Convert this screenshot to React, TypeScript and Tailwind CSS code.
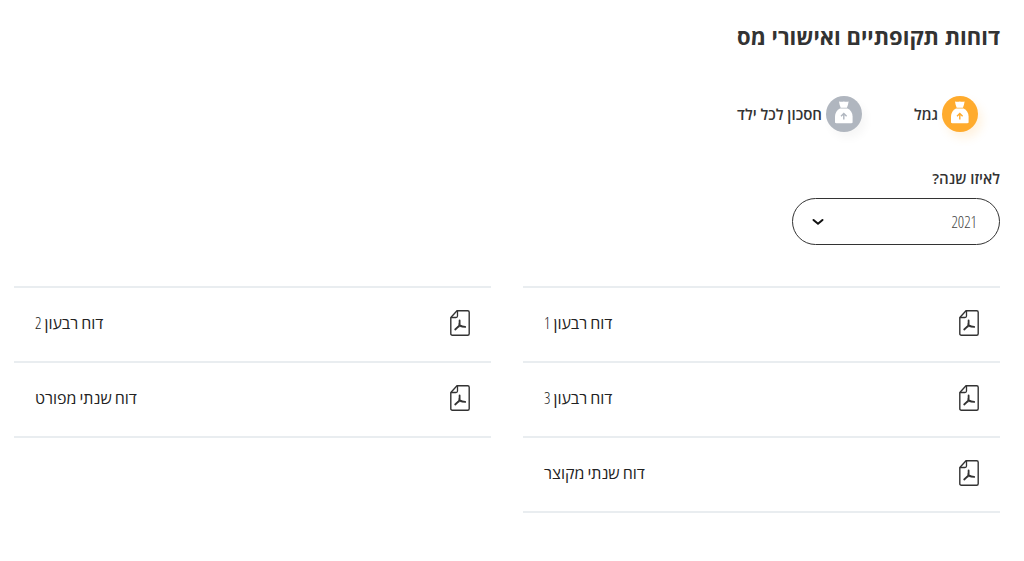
import clsx from 'clsx';
import { useState } from 'react';

type Report = { id: string; label: string };

const funds = [
  { id: 'gemel', label: 'גמל' },
  { id: 'child', label: 'חסכון לכל ילד' },
];

const years = ['2021', '2020', '2019'];

const firstColumn: Array<Report> = [
  { id: 'q1', label: 'דוח רבעון 1' },
  { id: 'q3', label: 'דוח רבעון 3' },
  { id: 'annual-short', label: 'דוח שנתי מקוצר' },
];

const secondColumn: Array<Report> = [
  { id: 'q2', label: 'דוח רבעון 2' },
  { id: 'annual-full', label: 'דוח שנתי מפורט' },
];

const MoneyBagIcon = () => (
  <svg className="h-9 w-9" viewBox="0 0 36 36" fill="none" aria-hidden="true">
    <path d="M13 5.500c1.700.5 3.300.4 4.800 0 1.600.4 3.200.5 4.800 0-.2 2.200-.9 4.200-1.700 6.300h-6.200c-.8-2.100-1.500-4.100-1.700-6.300Z" fill="#fff" />
    <path d="M14 12.600h7.600c3 1.500 5 4.300 5 8v5.500c0 .8-.4 1.200-1.200 1.200H10.200c-.8 0-1.200-.4-1.200-1.200v-5.500c0-3.700 2-6.500 5-8Z" fill="#fff" />
    <path d="M17.800 23.500v-6M15 20.200l2.800-2.800 2.800 2.800" stroke="currentColor" strokeWidth="1.400" />
  </svg>
);

const PdfIcon = () => (
  <svg className="h-[26px] w-5 shrink-0" viewBox="0 0 20 26" fill="none" stroke="#333" aria-hidden="true">
    <path d="M7 .8h10.700c.9 0 1.500.6 1.500 1.500v21.400c0 .9-.6 1.500-1.500 1.500H2.300c-.9 0-1.500-.6-1.500-1.500V7.500L7 .8Z" strokeWidth="1.400" />
    <path d="M7.500 1v5c0 .9-.6 1.500-1.500 1.500H1" strokeWidth="1.300" />
    <path d="M9.600 10.500v4.900M9.600 15.400 5.200 19.500M9.600 15.400c1.700.9 3.500 1.400 5.600 1.500" strokeWidth="1.800" strokeLinecap="round" />
    <path d="M9 13.500c-.2 1.800-.8 3-2 4.300 1.800-1 3.200-1.300 5.200-1.200-1.600-.6-2.600-1.500-3.200-3.100Z" strokeWidth=".6" />
  </svg>
);

const ReportList = ({ reports }: { reports: Array<Report> }) => (
  <ul className="border-t-2 border-[#e9edf0] font-['Open_Sans_Condensed_Light','Open_Sans',sans-serif]">
    {reports.map(({ id, label }) => (
      <li key={id} className="border-b-2 border-[#e9edf0]">
        <a href={`#${id}`} className="flex h-[73px] items-center justify-between px-[21px] pb-1 text-base text-[#222]">
          <PdfIcon />
          {label}
        </a>
      </li>
    ))}
  </ul>
);

const App = () => {
  const [fund, setFund] = useState('gemel');
  const [year, setYear] = useState('2021');

  return (
    <main dir="rtl" className="bg-white pt-5 pr-6 pb-12 pl-3.5 font-['Open_Sans',sans-serif] text-[#333]">
      <h1 className="text-[22px] leading-8 font-bold">דוחות תקופתיים ואישורי מס</h1>

      <div className="mt-11 flex gap-13 pr-[22px]">
        {funds.map(({ id, label }) => (
          <button
            key={id}
            type="button"
            aria-pressed={fund === id}
            onClick={() => setFund(id)}
            className="flex items-center gap-1 text-[15px] leading-6 font-semibold"
          >
            <span
              className={clsx(
                'rounded-full',
                fund === id
                  ? 'bg-[#ffab2d] text-[#ffab2d] shadow-[4px_6px_10px_rgba(255,171,45,0.15)]'
                  : 'bg-[#b0b6bf] text-[#b0b6bf] shadow-[4px_6px_10px_rgba(0,0,0,0.04)]',
              )}
            >
              <MoneyBagIcon />
            </span>
            {label}
          </button>
        ))}
      </div>

      <label htmlFor="year" className="mt-[34px] block text-[15px] leading-6 font-semibold">
        לאיזו שנה?
      </label>
      <div className="relative mt-2 w-52">
        <select
          id="year"
          value={year}
          onChange={(event) => setYear(event.target.value)}
          className="block h-[47px] w-full appearance-none rounded-full border border-[#333] bg-white px-[22px] font-['Open_Sans_Condensed_Light','Open_Sans',sans-serif] text-base text-[#444]"
        >
          {years.map((item) => (
            <option key={item}>{item}</option>
          ))}
        </select>
        <svg
          className="pointer-events-none absolute top-5 left-5 h-2 w-3"
          viewBox="0 0 12 8"
          fill="none"
          stroke="#111"
          strokeWidth="2"
          aria-hidden="true"
        >
          <path d="m1.500 2 4.500 3.800L10.500 2" strokeLinecap="round" />
        </svg>
      </div>

      <div className="mt-[41px] grid grid-cols-2 items-start gap-x-8">
        <ReportList reports={firstColumn} />
        <ReportList reports={secondColumn} />
      </div>
    </main>
  );
};

export default App;
